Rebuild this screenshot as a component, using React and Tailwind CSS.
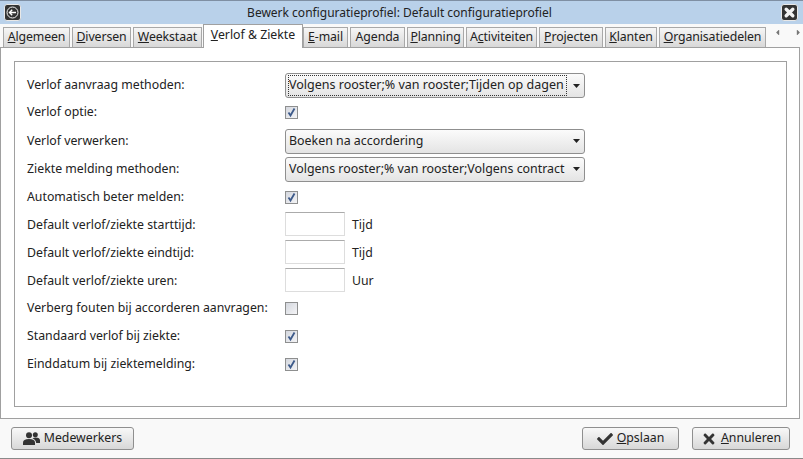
import { FaCheck, FaTimes, FaCaretLeft, FaCaretRight } from 'react-icons/fa';

const tabs = [
  { pre: '', key: 'A', post: 'lgemeen', width: 'w-[67px]' },
  { pre: '', key: 'D', post: 'iversen', width: 'w-[59px]' },
  { pre: '', key: 'W', post: 'eekstaat', width: 'w-[69px]' },
  { pre: '', key: 'V', post: 'erlof & Ziekte', width: 'w-[100px]', active: true },
  { pre: '', key: 'E', post: '-mail', width: 'w-[45px]' },
  { pre: 'A', key: 'g', post: 'enda', width: 'w-[55px]' },
  { pre: '', key: 'P', post: 'lanning', width: 'w-[57px]' },
  { pre: 'A', key: 'c', post: 'tiviteiten', width: 'w-[71px]' },
  { pre: '', key: 'P', post: 'rojecten', width: 'w-[64px]' },
  { pre: '', key: 'K', post: 'lanten', width: 'w-[52px]' },
  { pre: '', key: 'O', post: 'rganisatiedelen', width: 'w-[107px]' },
];

function Tab({ tab }) {
  if (tab.active) {
    return (
      <div className={`${tab.width} h-[24px] -mb-px -ml-px -mr-[2px] z-10 bg-white border border-b-0 border-[#a0a0a0] flex items-center justify-center pb-[2px] text-[12.3px] text-[#222]`}>
        <span><u>{tab.key}</u>{tab.post}</span>
      </div>
    );
  }
  return (
    <div className={`${tab.width} h-[20px] bg-gradient-to-b from-[#f6f6f6] to-[#d8d8d8] border border-b-0 border-[#a8a8a8] flex items-center justify-center text-[12.3px] tracking-[-0.1px] text-[#222]`}>
      <span>{tab.pre}<u>{tab.key}</u>{tab.post}</span>
    </div>
  );
}

function Select({ value, focused }) {
  return (
    <div className="w-[300px] h-[25px] rounded-[3px] border border-[#8f8f8f] bg-gradient-to-b from-[#fbfbfb] to-[#e4e4e4] flex items-center pl-[3px] pr-[4px] text-[#222]">
      <span className={`w-[277px] shrink-0 overflow-hidden whitespace-nowrap ${focused ? 'text-[12.5px] outline-1 outline-dotted outline-[#333]' : 'text-[12.4px]'}`}>{value}</span>
      <svg className="ml-[7px] shrink-0" width="7" height="4" viewBox="0 0 7 4">
        <path d="M0 0H7L3.500 4Z" fill="#222" />
      </svg>
    </div>
  );
}

function Check({ checked }) {
  return (
    <div className="w-[13px] h-[13px] border border-[#8e8f8f] bg-gradient-to-br from-[#d4d7de] to-[#f4f4f6] flex items-center justify-center">
      {checked && (
        <svg width="11" height="11" viewBox="0 0 11 11">
          <path d="M2.5 5.5 L4.5 8.5 L8.5 1.5" fill="none" stroke="#3d5a8a" strokeWidth="1.8" />
        </svg>
      )}
    </div>
  );
}

function TextBox({ unit }) {
  return (
    <div className="flex items-center">
      <div className="w-[60px] h-[24px] mb-[2px] bg-white border border-[#dddddd] border-t-[#ababab]" />
      <span className="ml-[7px]">{unit}</span>
    </div>
  );
}

function Row({ label, height, children }) {
  return (
    <div className={`flex items-center ${height}`}>
      <div className="w-[258px] whitespace-nowrap">{label}</div>
      {children}
    </div>
  );
}

function Button({ width, children }) {
  return (
    <div className={`${width} h-[23px] rounded-[3px] border border-[#8f8f8f] bg-gradient-to-b from-[#f8f8f8] to-[#d8d8d8] flex items-center justify-center gap-[4px] text-[12.3px] text-[#222]`}>
      {children}
    </div>
  );
}

export default function App() {
  return (
    <div className="w-[803px] h-[459px] overflow-hidden bg-[#f9f9f9] flex flex-col border-b border-[#8a8a8a] text-[#222] text-[12.3px] font-['Noto_Sans','Open_Sans',sans-serif]">
      <div className="h-[24px] shrink-0 bg-[#b9d1ea] border-t border-[#7f8fa3] flex items-center justify-between pl-[4px] pr-[5px] relative">
        <div className="w-[17px] h-[17px] rounded-[3px] bg-[#333] border border-[#e8e8e8] flex items-center justify-center">
          <svg width="13" height="13" viewBox="0 0 13 13">
            <circle cx="6.5" cy="6.5" r="5.5" fill="none" stroke="#f2f2f2" strokeWidth="1" />
            <path d="M10 6.5H3.8M6.2 3.8 3.5 6.5l2.7 2.7" fill="none" stroke="#fff" strokeWidth="1.4" />
          </svg>
        </div>
        <div className="text-[12px] mr-[3px] text-[#222]">Bewerk configuratieprofiel: Default configuratieprofiel</div>
        <div className="w-[17px] h-[17px] rounded-[3px] bg-[#333] border border-[#e8e8e8] flex items-center justify-center">
          <svg width="13" height="13" viewBox="0 0 13 13">
            <path d="M3.2 3.2 9.8 9.8M9.8 3.2 3.2 9.8" fill="none" stroke="#f2f2f2" strokeWidth="3.4" strokeLinecap="round" />
          </svg>
        </div>
      </div>

      <div className="h-[23px] shrink-0 flex items-end pl-[3px] gap-[2px] relative">
        {tabs.map(tab => <Tab key={tab.post} tab={tab} />)}
        <div className="flex items-center gap-[12px] ml-[5px] self-center pb-[6px] text-[#777] text-[9px]">
          <FaCaretLeft />
          <FaCaretRight />
        </div>
      </div>

      <div className="w-[800px] h-[372px] shrink-0 bg-white border border-[#a0a0a0] pt-[13px] px-[13px]">
        <div className="w-[773px] h-[346px] border border-[#a0a0a0] pl-[12px] pt-[10px]">
          <Row label="Verlof aanvraag methoden:" height="h-[27px]"><Select value="Volgens rooster;% van rooster;Tijden op dagen" focused /></Row>
          <Row label="Verlof optie:" height="h-[26px] mb-[2px]"><Check checked /></Row>
          <Row label="Verlof verwerken:" height="h-[28px]"><Select value="Boeken na accordering" /></Row>
          <Row label="Ziekte melding methoden:" height="h-[28px]"><Select value="Volgens rooster;% van rooster;Volgens contract" /></Row>
          <Row label="Automatisch beter melden:" height="h-[28px]"><Check checked /></Row>
          <Row label="Default verlof/ziekte starttijd:" height="h-[28px]"><TextBox unit="Tijd" /></Row>
          <Row label="Default verlof/ziekte eindtijd:" height="h-[28px]"><TextBox unit="Tijd" /></Row>
          <Row label="Default verlof/ziekte uren:" height="h-[28px]"><TextBox unit="Uur" /></Row>
          <Row label="Verberg fouten bij accorderen aanvragen:" height="h-[27px]"><Check /></Row>
          <Row label="Standaard verlof bij ziekte:" height="h-[28px]"><Check checked /></Row>
          <Row label="Einddatum bij ziektemelding:" height="h-[28px]"><Check checked /></Row>
        </div>
      </div>

      <div className="flex-1 flex items-center justify-between pl-[11px] pr-[13px]">
        <Button width="w-[123px]">
          <svg width="17" height="13" viewBox="0 0 17 13" className="shrink-0">
            <circle cx="6" cy="3.2" r="3" fill="#333" />
            <path d="M0 13V10.5C0 8.2 2 7 6 7s6 1.2 6 3.5V13Z" fill="#333" />
            <circle cx="12.3" cy="2.8" r="2.5" fill="#333" />
            <path d="M9.5 6.2c1-.5 1.9-.7 3-.7 3 0 4.5 1.1 4.5 3V11h-3.8c0-2-1.200-3.500-3.700-4.800Z" fill="#333" />
          </svg>
          <span>Medewerkers</span>
        </Button>
        <div className="flex gap-[13px]">
          <Button width="w-[97px]">
            <FaCheck className="text-[16px] text-[#333]" />
            <span><u>O</u>pslaan</span>
          </Button>
          <Button width="w-[98px]">
            <FaTimes className="text-[16px] text-[#333]" />
            <span><u>A</u>nnuleren</span>
          </Button>
        </div>
      </div>
    </div>
  );
}
